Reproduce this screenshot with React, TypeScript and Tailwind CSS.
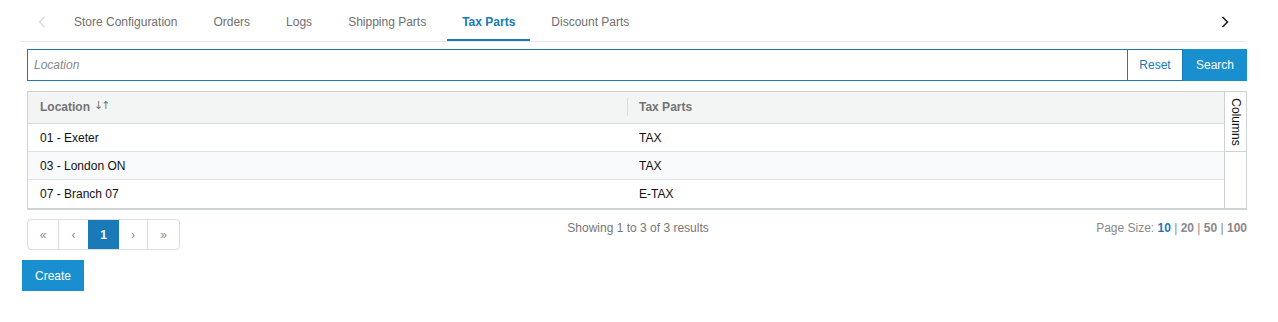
import React from 'react';

const tabs = ['Store Configuration', 'Orders', 'Logs', 'Shipping Parts', 'Tax Parts', 'Discount Parts'];

const rows = [
  { location: '01 - Exeter', tax: 'TAX' },
  { location: '03 - London ON', tax: 'TAX' },
  { location: '07 - Branch 07', tax: 'E-TAX' },
];

const Chevron: React.FC<{ dir: 'left' | 'right'; className?: string }> = ({ dir, className }) => (
  <svg width="8" height="12" viewBox="0 0 8 12" className={className} fill="none" stroke="currentColor" strokeWidth={1.6}>
    {dir === 'left' ? <path d="M6.5 1L1.5 6l5 5" /> : <path d="M1.5 1l5 5-5 5" />}
  </svg>
);

const App: React.FC = () => {
  return (
    <div className="w-[1278px] h-[322px] bg-white text-[12px]" style={{ fontFamily: '"Liberation Sans", Arial, sans-serif' }}>
      {/* Tabs */}
      <div className="ml-[21px] w-[1225px] h-[42px] border-b border-[#e8e8e8] flex items-stretch">
        <div className="w-[38px] flex items-center pl-[17px] pt-[2px]">
          <Chevron dir="left" className="text-[#dcdcdc]" />
        </div>
        <div className="flex gap-[6px]">
          {tabs.map((t) => (
            <div
              key={t}
              className={
                t === 'Tax Parts'
                  ? 'px-[15px] flex items-center border-b-2 border-[#1a7ab8] text-[#1a7ab8] font-bold pt-[5px]'
                  : 'px-[15px] flex items-center text-[#6f6f6f] pt-[3px]'
              }
            >
              {t}
            </div>
          ))}
        </div>
        <div className="flex-1" />
        <div className="w-[25px] flex items-center pt-[3px]">
          <Chevron dir="right" className="text-[#222]" />
        </div>
      </div>

      <div className="ml-[27px] w-[1220px]">
        {/* Search */}
        <div className="mt-[7px] flex h-[32px]">
          <div className="flex-1 border border-[#1a7ab8] flex items-center px-[6px]">
            <span className="italic text-[#888]">Location</span>
          </div>
          <div className="w-[55px] border-y border-r border-[#1a7ab8] flex items-center justify-center text-[#1a7ab8]">Reset</div>
          <div className="w-[64px] bg-[#1a8fd0] flex items-center justify-center text-white">Search</div>
        </div>

        {/* Table */}
        <div className="mt-[10px] flex border border-[#cfd2d4] border-b-2">
          <div className="flex-1">
            <div className="h-[32px] bg-[#f3f4f4] border-b border-[#d7dadd] flex items-center font-bold text-[#737373] pb-[2px]">
              <div className="w-[599px] pl-[12px] flex items-center">
                Location <span className="ml-[4px] font-normal tracking-[-2px]" style={{ fontFamily: '"DejaVu Sans", sans-serif', fontSize: '11px' }}>↓↑</span>
              </div>
              <div className="h-[18px] border-l border-[#dcdcdc] pl-[11px] flex items-center">Tax Parts</div>
            </div>
            {rows.map((r, i) => (
              <div
                key={r.location}
                className={
                  'h-[28px] flex items-center text-[#111] ' +
                  (i < rows.length - 1 ? 'border-b border-[#dfe3e8] ' : '') +
                  (i === 1 ? 'bg-[#f9fafc]' : 'bg-white')
                }
              >
                <div className="w-[599px] pl-[12px]">{r.location}</div>
                <div className="pl-[12px]">{r.tax}</div>
              </div>
            ))}
          </div>
          <div className="w-[22px] border-l border-[#cfd2d4]">
            <div className="h-[60px] border-b border-[#cfd2d4] flex items-center justify-center">
              <span className="rotate-90 whitespace-nowrap text-[#111]">Columns</span>
            </div>
          </div>
        </div>

        {/* Pagination row */}
        <div className="mt-[9px] flex items-start h-[31px]">
          <div className="flex border border-[#dddddd] rounded-[4px] h-[31px] overflow-hidden">
            <div className="w-[31px] flex items-center justify-center text-[#8a8a8a] border-r border-[#dddddd]">«</div>
            <div className="w-[29px] flex items-center justify-center text-[#8a8a8a]">‹</div>
            <div className="w-[31px] flex items-center justify-center bg-[#1a7ab8] text-white font-bold">1</div>
            <div className="w-[29px] flex items-center justify-center text-[#8a8a8a] border-r border-[#dddddd]">›</div>
            <div className="w-[31px] flex items-center justify-center text-[#8a8a8a]">»</div>
          </div>
          <div className="flex-1 text-center text-[#777]">Showing 1 to 3 of 3 results</div>
          <div className="text-[#888]">
            Page Size: <span className="font-bold text-[#1a7ab8]">10</span> | <span className="font-bold">20</span> |{' '}
            <span className="font-bold">50</span> | <span className="font-bold">100</span>
          </div>
        </div>
      </div>

      <div className="ml-[22px] mt-[10px] w-[62px] h-[31px] bg-[#1a8fd0] text-white flex items-center justify-center">Create</div>
    </div>
  );
};

export default App;
